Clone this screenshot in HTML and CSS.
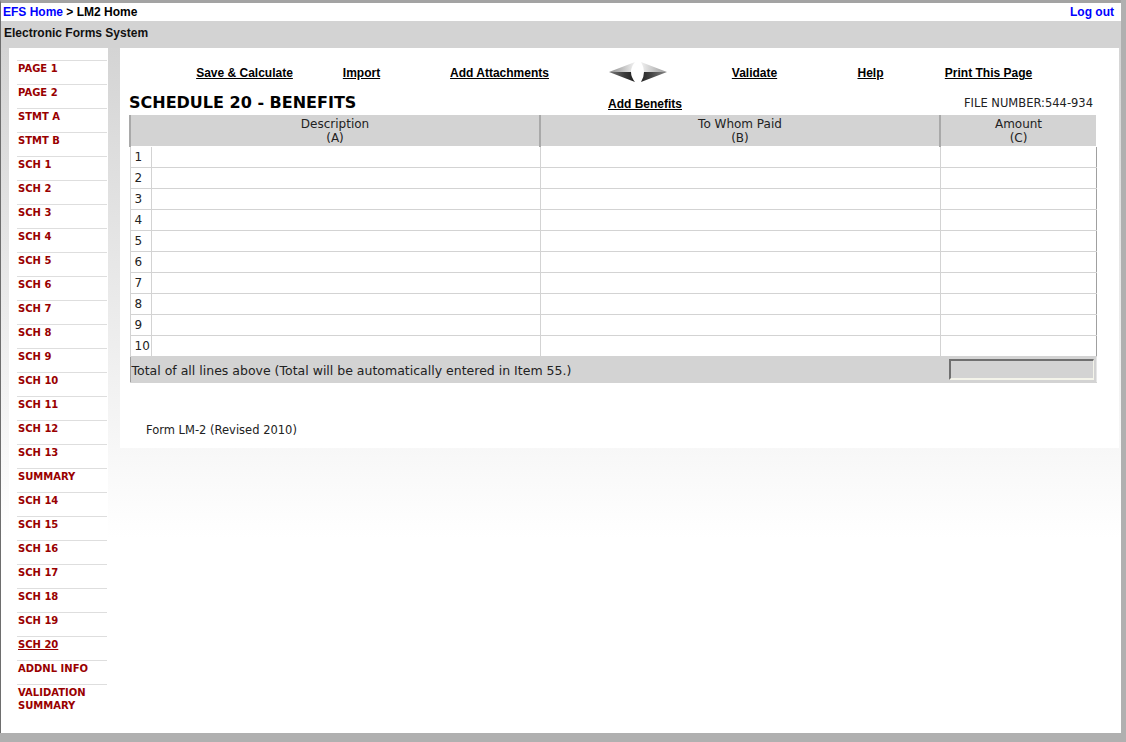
FILE: index.html
```
<!DOCTYPE html>
<html lang="en">
<head>
    <meta charset="UTF-8">
    <meta name="viewport" content="width=device-width, initial-scale=1.0">
    <title>LM-2 Schedule 20 - Benefits</title>
    <link rel="stylesheet" href="styles.css">
</head>
<body>
<div class="frame">

    <!-- Breadcrumb bar -->
    <div class="topbar">
        <div class="crumbs"><a href="#">EFS Home</a> &gt; LM2 Home</div>
        <a href="#">Log out</a>
    </div>
    <div class="appbar">Electronic Forms System</div>

    <div class="main">
        <!-- Form pages -->
        <ul class="sidenav">
            <li><a href="#">PAGE 1</a></li>
            <li><a href="#">PAGE 2</a></li>
            <li><a href="#">STMT A</a></li>
            <li><a href="#">STMT B</a></li>
            <li><a href="#">SCH 1</a></li>
            <li><a href="#">SCH 2</a></li>
            <li><a href="#">SCH 3</a></li>
            <li><a href="#">SCH 4</a></li>
            <li><a href="#">SCH 5</a></li>
            <li><a href="#">SCH 6</a></li>
            <li><a href="#">SCH 7</a></li>
            <li><a href="#">SCH 8</a></li>
            <li><a href="#">SCH 9</a></li>
            <li><a href="#">SCH 10</a></li>
            <li><a href="#">SCH 11</a></li>
            <li><a href="#">SCH 12</a></li>
            <li><a href="#">SCH 13</a></li>
            <li><a href="#">SUMMARY</a></li>
            <li><a href="#">SCH 14</a></li>
            <li><a href="#">SCH 15</a></li>
            <li><a href="#">SCH 16</a></li>
            <li><a href="#">SCH 17</a></li>
            <li><a href="#">SCH 18</a></li>
            <li><a href="#">SCH 19</a></li>
            <li><a href="#" class="current">SCH 20</a></li>
            <li><a href="#">ADDNL INFO</a></li>
            <li><a href="#">VALIDATION SUMMARY</a></li>
        </ul>

        <div class="panel">
            <!-- Actions -->
            <div class="toolbar">
                <span class="tool tool-save"><a href="#">Save &amp; Calculate</a></span>
                <span class="tool tool-import"><a href="#">Import</a></span>
                <span class="tool tool-attach"><a href="#">Add Attachments</a></span>
                <span class="tool tool-nav">
                    <svg width="60" height="20" viewBox="0 0 60 20">
                        <defs>
                            <linearGradient id="upL" x1="0" y1="0" x2="1" y2="0">
                                <stop offset="0" stop-color="#8a8a8a"/>
                                <stop offset="0.55" stop-color="#c4c4c4"/>
                                <stop offset="1" stop-color="#f2f2f2"/>
                            </linearGradient>
                            <linearGradient id="loL" x1="0" y1="0" x2="1" y2="0">
                                <stop offset="0" stop-color="#7a7a7a"/>
                                <stop offset="0.6" stop-color="#3a3a3a"/>
                                <stop offset="1" stop-color="#1e1e1e"/>
                            </linearGradient>
                            <linearGradient id="upR" x1="1" y1="0" x2="0" y2="0">
                                <stop offset="0" stop-color="#959595"/>
                                <stop offset="0.55" stop-color="#cacaca"/>
                                <stop offset="1" stop-color="#f0f0f0"/>
                            </linearGradient>
                            <linearGradient id="loR" x1="1" y1="0" x2="0" y2="0">
                                <stop offset="0" stop-color="#8a8a8a"/>
                                <stop offset="0.6" stop-color="#454545"/>
                                <stop offset="1" stop-color="#262626"/>
                            </linearGradient>
                        </defs>
                        <path d="M1 10 L27 0 Q23 5 23 10 Z" fill="url(#upL)"/>
                        <path d="M1 10 L23 10 Q23 15 27 20 Z" fill="url(#loL)"/>
                        <path d="M59 10 L33 0 Q36 5 36 10 Z" fill="url(#upR)"/>
                        <path d="M59 10 L36 10 Q36 15 33 20 Z" fill="url(#loR)"/>
                    </svg>
                </span>
                <span class="tool tool-validate"><a href="#">Validate</a></span>
                <span class="tool tool-help"><a href="#">Help</a></span>
                <span class="tool tool-print"><a href="#">Print This Page</a></span>
            </div>

            <div class="sched-head">
                <h2 class="sched-title">SCHEDULE 20 - BENEFITS</h2>
                <a href="#" class="add-link">Add Benefits</a>
                <span class="file-no">FILE NUMBER:544-934</span>
            </div>

            <table class="sched">
                <colgroup>
                    <col class="col-num">
                    <col class="col-desc">
                    <col class="col-paid">
                    <col class="col-amt">
                </colgroup>
                <tr class="head-row">
                    <th colspan="2">Description<br>(A)</th>
                    <th>To Whom Paid<br>(B)</th>
                    <th>Amount<br>(C)</th>
                </tr>
                <tr><td class="num">1</td><td></td><td></td><td></td></tr>
                <tr><td class="num">2</td><td></td><td></td><td></td></tr>
                <tr><td class="num">3</td><td></td><td></td><td></td></tr>
                <tr><td class="num">4</td><td></td><td></td><td></td></tr>
                <tr><td class="num">5</td><td></td><td></td><td></td></tr>
                <tr><td class="num">6</td><td></td><td></td><td></td></tr>
                <tr><td class="num">7</td><td></td><td></td><td></td></tr>
                <tr><td class="num">8</td><td></td><td></td><td></td></tr>
                <tr><td class="num">9</td><td></td><td></td><td></td></tr>
                <tr><td class="num">10</td><td></td><td></td><td></td></tr>
                <tr class="total-row">
                    <td colspan="3" class="total-label">Total of all lines above (Total will be automatically entered in Item 55.)</td>
                    <td class="total-amt"><input type="text" readonly></td>
                </tr>
            </table>

            <p class="form-note">Form LM-2 (Revised 2010)</p>
        </div>
    </div>
</div>
</body>
</html>
```

FILE: styles.css
```
body {
    margin: 0;
    background-color: #b0b0b0;
    font-family: "DejaVu Sans", Verdana, sans-serif;
    font-size: 11.5px;
    color: #222;
}

.frame {
    width: 1120px;
    height: 730px;
    border-top: 3px solid #a3a3a3;
    border-left: 1px solid #6e6e6e;
    display: flex;
    flex-direction: column;
}

/* top bars */
.topbar {
    height: 18px;
    padding: 0 7px 0 2px;
    background-color: #fff;
    display: flex;
    justify-content: space-between;
    align-items: center;
    font: bold 12px "Liberation Sans", Arial, sans-serif;
    color: #000;
}

.topbar a {
    color: #0000ff;
    text-decoration: none;
}

.appbar {
    height: 27px;
    box-sizing: border-box;
    padding: 5px 0 0 3px;
    background-color: #d3d3d3;
    font: bold 12px/15px "Liberation Sans", Arial, sans-serif;
    color: #111;
}

.main {
    flex: 1;
    display: flex;
    align-items: flex-start;
    padding-left: 8px;
    background: linear-gradient(#d4d4d4 0, #fff 490px);
}

/* side navigation */
.sidenav {
    list-style: none;
    margin: 0;
    padding: 12px 0 0 8px;
    width: 91px;
    align-self: stretch;
    background-color: #fff;
}

.sidenav li {
    width: 89px;
    border-top: 1px solid #dedede;
    padding: 1px 0 9px 1px;
    line-height: 13px;
}

.sidenav a {
    color: #990000;
    font-weight: bold;
    font-size: 10px;
    text-decoration: none;
}

.sidenav a.current {
    text-decoration: underline;
}

/* content panel */
.panel {
    margin-left: 12px;
    width: 990px;
    padding: 17px 0 11px 9px;
    background-color: #fff;
}

.toolbar {
    display: flex;
    height: 16px;
    margin-left: 57px;
    font: bold 12px/16px "Liberation Sans", Arial, sans-serif;
}

.tool {
    display: flex;
    justify-content: center;
    align-items: center;
}

.tool a, .add-link {
    color: #000;
    text-decoration: underline;
}

.tool-save { width: 117px; }
.tool-import { width: 117px; }
.tool-attach { width: 159px; }
.tool-nav { width: 117px; }
.tool-validate { width: 117px; }
.tool-help { width: 115px; }
.tool-print { width: 121px; }

.tool-nav svg {
    display: block;
    margin-top: -2px;
}

.sched-head {
    display: flex;
    align-items: center;
    width: 964px;
    height: 22px;
    margin-top: 10px;
}

.sched-title {
    width: 479px;
    margin: 0;
    font-size: 16px;
    font-weight: bold;
    color: #000;
}

.add-link {
    padding-top: 3px;
    font: bold 12px "Liberation Sans", Arial, sans-serif;
}

.file-no {
    margin-left: auto;
    padding-top: 2px;
}

/* schedule table */
.sched {
    margin-top: 2px;
    width: 966px;
    border-collapse: collapse;
    table-layout: fixed;
}

.col-num { width: 21px; }
.col-desc { width: 389px; }
.col-paid { width: 400px; }
.col-amt { width: 156px; }

.sched tr {
    height: 21px;
}

.sched tr.head-row {
    height: 31px;
}

.sched th {
    padding: 2px 0 0;
    background-color: #d3d3d3;
    border-left: 2px solid #a9a9a9;
    border-bottom: 1px solid #fff;
    font-weight: normal;
    font-size: 12px;
    line-height: 14px;
    color: #222;
}

.sched td {
    padding: 0;
    border: 1px solid #d3d3d3;
}

.sched td:last-child {
    border-right-color: #a0a0a0;
}

.sched td.num {
    padding-left: 4px;
    font-size: 12px;
}

.sched tr.total-row {
    height: 26px;
}

.total-row td {
    background-color: #d3d3d3;
}

.sched td.total-label {
    padding: 2px 0 0 1px;
    border-left-color: #a0a0a0;
    font-size: 12.5px;
}

.sched td.total-amt {
    border-left: 1px solid #a0a0a0;
    border-right-color: #e6e6e6;
}

.total-amt input {
    display: block;
    width: 145px;
    height: 21px;
    margin-left: 8px;
    box-sizing: border-box;
    border-style: solid;
    border-width: 2px 1px 2px 2px;
    border-color: #707070 #f4f4ea #f4f4ea #707070;
    background-color: #d3d3d3;
}

.form-note {
    margin: 40px 0 0 17px;
    line-height: 14px;
}
```
